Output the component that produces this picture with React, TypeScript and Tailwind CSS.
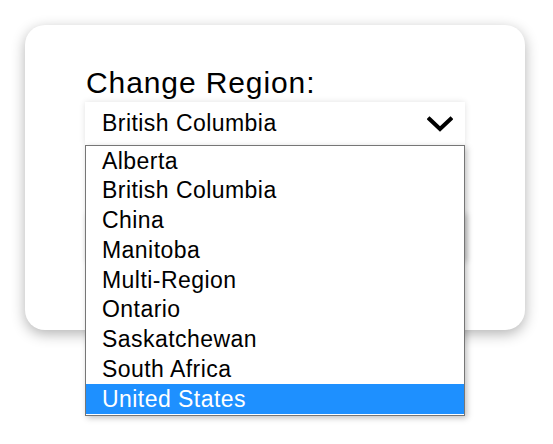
import { useState } from 'react';

const regions = [
  'Alberta',
  'British Columbia',
  'China',
  'Manitoba',
  'Multi-Region',
  'Ontario',
  'Saskatchewan',
  'South Africa',
  'United States',
];

export default function App() {
  const [selected] = useState('British Columbia');
  const [hovered, setHovered] = useState('United States');

  return (
    <div className="w-[553px] h-[444px] bg-white overflow-hidden font-['Liberation_Sans',Arial,sans-serif] text-black">
      <div className="ml-[25px] mt-[25px] w-[500px] h-[305px] rounded-[20px] bg-white shadow-[0_4px_14px_rgba(0,0,0,0.3)] pt-[42px] pl-[60px]">
        <label className="block text-[30px] leading-[32px] tracking-[0.9px] pl-[1px]">Change Region:</label>

        <div className="relative mt-[3px] w-[380px]">
          {/* select trigger */}
          <div className="h-[43px] bg-white shadow-[0_0_6px_rgba(0,0,0,0.12)] flex items-center justify-between pl-[17px] pr-[12px]">
            <span className="text-[23px] tracking-[0.45px]">{selected}</span>
            <svg width="26" height="16" viewBox="0 0 26 16" fill="none">
              <path d="M2.5 3 L13 13 L23.5 3" stroke="black" strokeWidth="4" strokeLinecap="square" strokeLinejoin="miter" />
            </svg>
          </div>

          {/* button sitting under the open list */}
          <div className="mt-[67px] h-[48px] bg-white shadow-[2px_2px_6px_rgba(0,0,0,0.2)]" />

          {/* open options list */}
          <ul className="absolute left-0 top-[43px] w-[380px] bg-white border border-[#767676] pb-[1px] shadow-[2px_2px_6px_rgba(0,0,0,0.25)]">
            {regions.map((r) => (
              <li
                key={r}
                onMouseEnter={() => setHovered(r)}
                className={`h-[29.75px] flex items-center pl-[16px] text-[23px] tracking-[0.45px] ${
                  hovered === r ? 'bg-[#1e90ff] text-white' : 'text-black'
                }`}
              >
                {r}
              </li>
            ))}
          </ul>
        </div>
      </div>
    </div>
  );
}
